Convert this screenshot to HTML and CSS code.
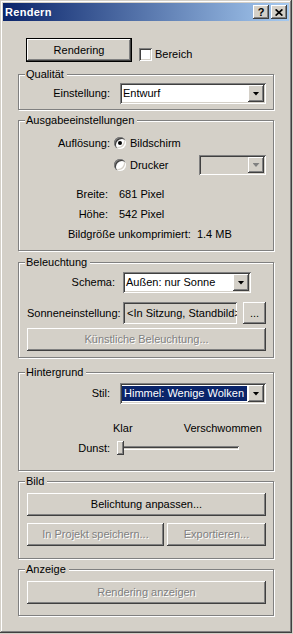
FILE: index.html
```html
<!DOCTYPE html>
<html lang="de">
<head>
  <meta charset="UTF-8">
  <meta name="viewport" content="width=device-width, initial-scale=1.0">
  <title>Rendern</title>
  <link rel="stylesheet" href="styles.css">
</head>
<body>
  <div class="window">
    <div class="titlebar">
      <span class="title">Rendern</span>
      <div class="caption-buttons">
        <span class="cap-btn">?</span>
        <span class="cap-btn">
          <svg width="8" height="7" viewBox="0 0 8 7"><path d="M0.6 0.4l6.8 6.2M7.4 0.4L0.6 6.6" stroke="#000" stroke-width="1.7"/></svg>
        </span>
      </div>
    </div>

    <div class="content">
      <div class="top-row">
        <div class="btn btn-default render-btn">Rendering</div>
        <div class="check">
          <span class="checkbox"></span>
          <span>Bereich</span>
        </div>
      </div>

      <fieldset class="group quality">
        <legend>Qualität</legend>
        <div class="row">
          <span class="label">Einstellung:</span>
          <div class="combo"><span class="value">Entwurf</span><span class="drop"></span></div>
        </div>
      </fieldset>

      <fieldset class="group output">
        <legend>Ausgabeeinstellungen</legend>
        <div class="row radio-row first">
          <span class="label short">Auflösung:</span>
          <span class="radio checked"></span>
          <span>Bildschirm</span>
        </div>
        <div class="row radio-row second">
          <span class="label short"></span>
          <span class="radio"></span>
          <span>Drucker</span>
          <div class="combo disabled printer-combo"><span class="value"></span><span class="drop"></span></div>
        </div>
        <div class="row info width-row">
          <span class="label narrow">Breite:</span>
          <span>681 Pixel</span>
        </div>
        <div class="row info">
          <span class="label narrow">Höhe:</span>
          <span>542 Pixel</span>
        </div>
        <div class="row info size-row">
          <span>Bildgröße unkomprimiert:</span>
          <span class="size-value">1.4 MB</span>
        </div>
      </fieldset>

      <fieldset class="group lighting">
        <legend>Beleuchtung</legend>
        <div class="row schema-row">
          <span class="label wide">Schema:</span>
          <div class="combo schema-combo"><span class="value">Außen: nur Sonne</span><span class="drop"></span></div>
        </div>
        <div class="row sun-row">
          <span class="label wide">Sonneneinstellung:</span>
          <div class="textbox">&lt;In Sitzung, Standbild&gt;</div>
          <div class="btn dots-btn">...</div>
        </div>
        <div class="btn disabled artificial-btn">Künstliche Beleuchtung...</div>
      </fieldset>

      <fieldset class="group background">
        <legend>Hintergrund</legend>
        <div class="row style-row">
          <span class="label">Stil:</span>
          <div class="combo focused"><span class="value">Himmel: Wenige Wolken</span><span class="drop"></span></div>
        </div>
        <div class="row scale-row">
          <span>Klar</span>
          <span>Verschwommen</span>
        </div>
        <div class="row haze-row">
          <span class="label">Dunst:</span>
          <div class="slider">
            <div class="track"></div>
            <div class="thumb"></div>
          </div>
        </div>
      </fieldset>

      <fieldset class="group image">
        <legend>Bild</legend>
        <div class="btn exposure-btn">Belichtung anpassen...</div>
        <div class="btn-row">
          <div class="btn disabled save-btn">In Projekt speichern...</div>
          <div class="btn disabled export-btn">Exportieren...</div>
        </div>
      </fieldset>

      <fieldset class="group display">
        <legend>Anzeige</legend>
        <div class="btn disabled show-btn">Rendering anzeigen</div>
      </fieldset>
    </div>
  </div>
</body>
</html>
```

FILE: styles.css
```css
* {
  box-sizing: border-box;
}

body {
  margin: 0;
  background: #d4d0c8;
  font-family: "Liberation Sans", Arial, sans-serif;
  font-size: 11px;
  line-height: 13px;
  color: #000;
}

.window {
  width: 292px;
  height: 633px;
  padding: 3px;
  background: #d4d0c8;
  box-shadow: inset -1px -1px #404040, inset 1px 1px #d4d0c8, inset -2px -2px #808080, inset 2px 2px #fff;
}

/* title bar */
.titlebar {
  height: 18px;
  display: flex;
  align-items: center;
  justify-content: space-between;
  padding: 0 2px;
  background: linear-gradient(to right, #0a246a, #a6caf0);
  color: #fff;
}
.title {
  font-weight: bold;
  letter-spacing: 0.3px;
}
.caption-buttons {
  display: flex;
  gap: 2px;
}
.cap-btn {
  width: 16px;
  height: 14px;
  display: flex;
  align-items: center;
  justify-content: center;
  background: #d4d0c8;
  color: #000;
  font-weight: bold;
  box-shadow: inset -1px -1px #404040, inset 1px 1px #fff, inset -2px -2px #808080;
}

.content {
  padding: 0 15px;
}

/* buttons */
.btn {
  height: 23px;
  display: flex;
  align-items: center;
  justify-content: center;
  background: #d4d0c8;
  box-shadow: inset -1px -1px #404040, inset 1px 1px #fff, inset -2px -2px #808080;
  white-space: nowrap;
}
.btn.disabled {
  color: #808080;
  text-shadow: 1px 1px #fff;
}
.btn-default {
  height: 24px;
  border: 1px solid #000;
  box-shadow: inset -1px -1px #404040, inset 1px 1px #fff, inset -2px -2px #808080;
}

.top-row {
  display: flex;
  margin: 17px 0 0 8px;
}
.render-btn {
  width: 106px;
}
.check {
  display: flex;
  align-items: center;
  margin: 8px 0 0 7px;
}
.checkbox {
  width: 13px;
  height: 13px;
  margin-right: 3px;
  background: #fff;
  box-shadow: inset 1px 1px #808080, inset -1px -1px #fff, inset 2px 2px #404040, inset -2px -2px #d4d0c8;
}

/* group boxes */
.group {
  width: 256px;
  min-width: 0;
  margin: 4px 0 0;
  padding: 2px 7px 0 8px;
  border: 1px solid #808080;
  box-shadow: 1px 1px #fff, inset 1px 1px #fff;
}
.group legend {
  margin-left: -2px;
  padding: 0 3px 0 1px;
  background: #d4d0c8;
  line-height: 13px;
}
.quality {
  margin-top: 6px;
  padding-bottom: 5px;
}
.output {
  padding-bottom: 9px;
}
.lighting {
  margin-top: 5px;
  padding-bottom: 6px;
}
.background {
  margin-top: 8px;
  padding-bottom: 15px;
}
.image {
  padding-bottom: 12px;
}
.display {
  padding-bottom: 11px;
}

.row {
  display: flex;
  align-items: center;
  white-space: nowrap;
}
.label {
  width: 83px;
  margin-right: 10px;
  text-align: right;
  flex-shrink: 0;
}
.label.short {
  margin-right: 4px;
}
.label.narrow {
  width: 81px;
  margin-right: 11px;
}
.label.wide {
  width: 88px;
  margin-right: 8px;
}

/* combo boxes */
.combo {
  flex: 1;
  height: 21px;
  display: flex;
  padding: 2px;
  background: #fff;
  box-shadow: inset 1px 1px #808080, inset -1px -1px #fff, inset 2px 2px #404040, inset -2px -2px #d4d0c8;
}
.combo .value {
  flex: 1;
  padding-left: 1px;
  line-height: 17px;
  overflow: hidden;
}
.combo .drop {
  width: 16px;
  display: flex;
  align-items: center;
  justify-content: center;
  background: #d4d0c8;
  box-shadow: inset -1px -1px #404040, inset 1px 1px #fff, inset -2px -2px #808080;
}
.combo .drop::after {
  content: "";
  width: 7px;
  height: 4px;
  background: #000;
  clip-path: polygon(0 0, 100% 0, 50% 100%);
}
.combo.disabled {
  background: #d4d0c8;
}
.combo.disabled .drop::after {
  background: #808080;
}
.combo.focused .value {
  margin: 1px 1px 1px 0;
  padding-left: 2px;
  line-height: 15px;
  background: #0a246a;
  color: #fff;
}

/* Ausgabeeinstellungen */
.radio-row.first {
  height: 14px;
  margin-top: 7px;
}
.radio-row.second {
  height: 20px;
  margin-top: 5px;
}
.radio {
  position: relative;
  width: 12px;
  height: 12px;
  margin-right: 4px;
  border-radius: 50%;
  background: #fff;
  box-shadow: inset 1px 1px #808080, inset 2px 2px #404040, inset -1px -1px #fff, inset -2px -2px #d4d0c8;
}
.radio.checked::after {
  content: "";
  position: absolute;
  left: 4px;
  top: 4px;
  width: 4px;
  height: 4px;
  border-radius: 50%;
  background: #000;
}
.printer-combo {
  flex: 0 0 67px;
  height: 20px;
  margin-left: auto;
}
.info {
  margin-top: 7px;
}
.info.width-row {
  margin-top: 13px;
}
.size-row {
  padding-left: 41px;
}
.size-value {
  margin-left: 6px;
}

/* Beleuchtung */
.schema-row {
  margin-top: 1px;
}
.schema-combo {
  flex: 0 0 128px;
}
.sun-row {
  margin-top: 9px;
}
.textbox {
  width: 114px;
  height: 22px;
  padding: 0 4px;
  line-height: 22px;
  overflow: hidden;
  background: #d4d0c8;
  box-shadow: inset 1px 1px #808080, inset -1px -1px #fff, inset 2px 2px #404040, inset -2px -2px #d4d0c8;
}
.dots-btn {
  width: 23px;
  height: 22px;
  margin-left: 6px;
}
.artificial-btn {
  margin-top: 4px;
}

/* Hintergrund */
.style-row {
  margin-top: 2px;
}
.scale-row {
  justify-content: space-between;
  margin-top: 18px;
  padding: 0 4px 0 86px;
}
.haze-row {
  margin-top: 6px;
}
.haze-row .label {
  margin-right: 7px;
}
.slider {
  position: relative;
  width: 122px;
  height: 14px;
}
.track {
  height: 4px;
  margin-top: 5px;
  box-shadow: inset 1px 1px #808080, inset -1px -1px #fff, inset 2px 2px #404040, inset -2px -2px #d4d0c8;
}
.thumb {
  position: absolute;
  left: 0;
  top: 0;
  width: 7px;
  height: 14px;
  background: #d4d0c8;
  box-shadow: inset -1px -1px #404040, inset 1px 1px #fff, inset -2px -2px #808080;
}

/* Bild, Anzeige */
.exposure-btn,
.show-btn {
  margin-top: 3px;
}
.btn-row {
  display: flex;
  gap: 3px;
  margin-top: 7px;
}
.save-btn {
  width: 137px;
}
.export-btn {
  flex: 1;
}
```
